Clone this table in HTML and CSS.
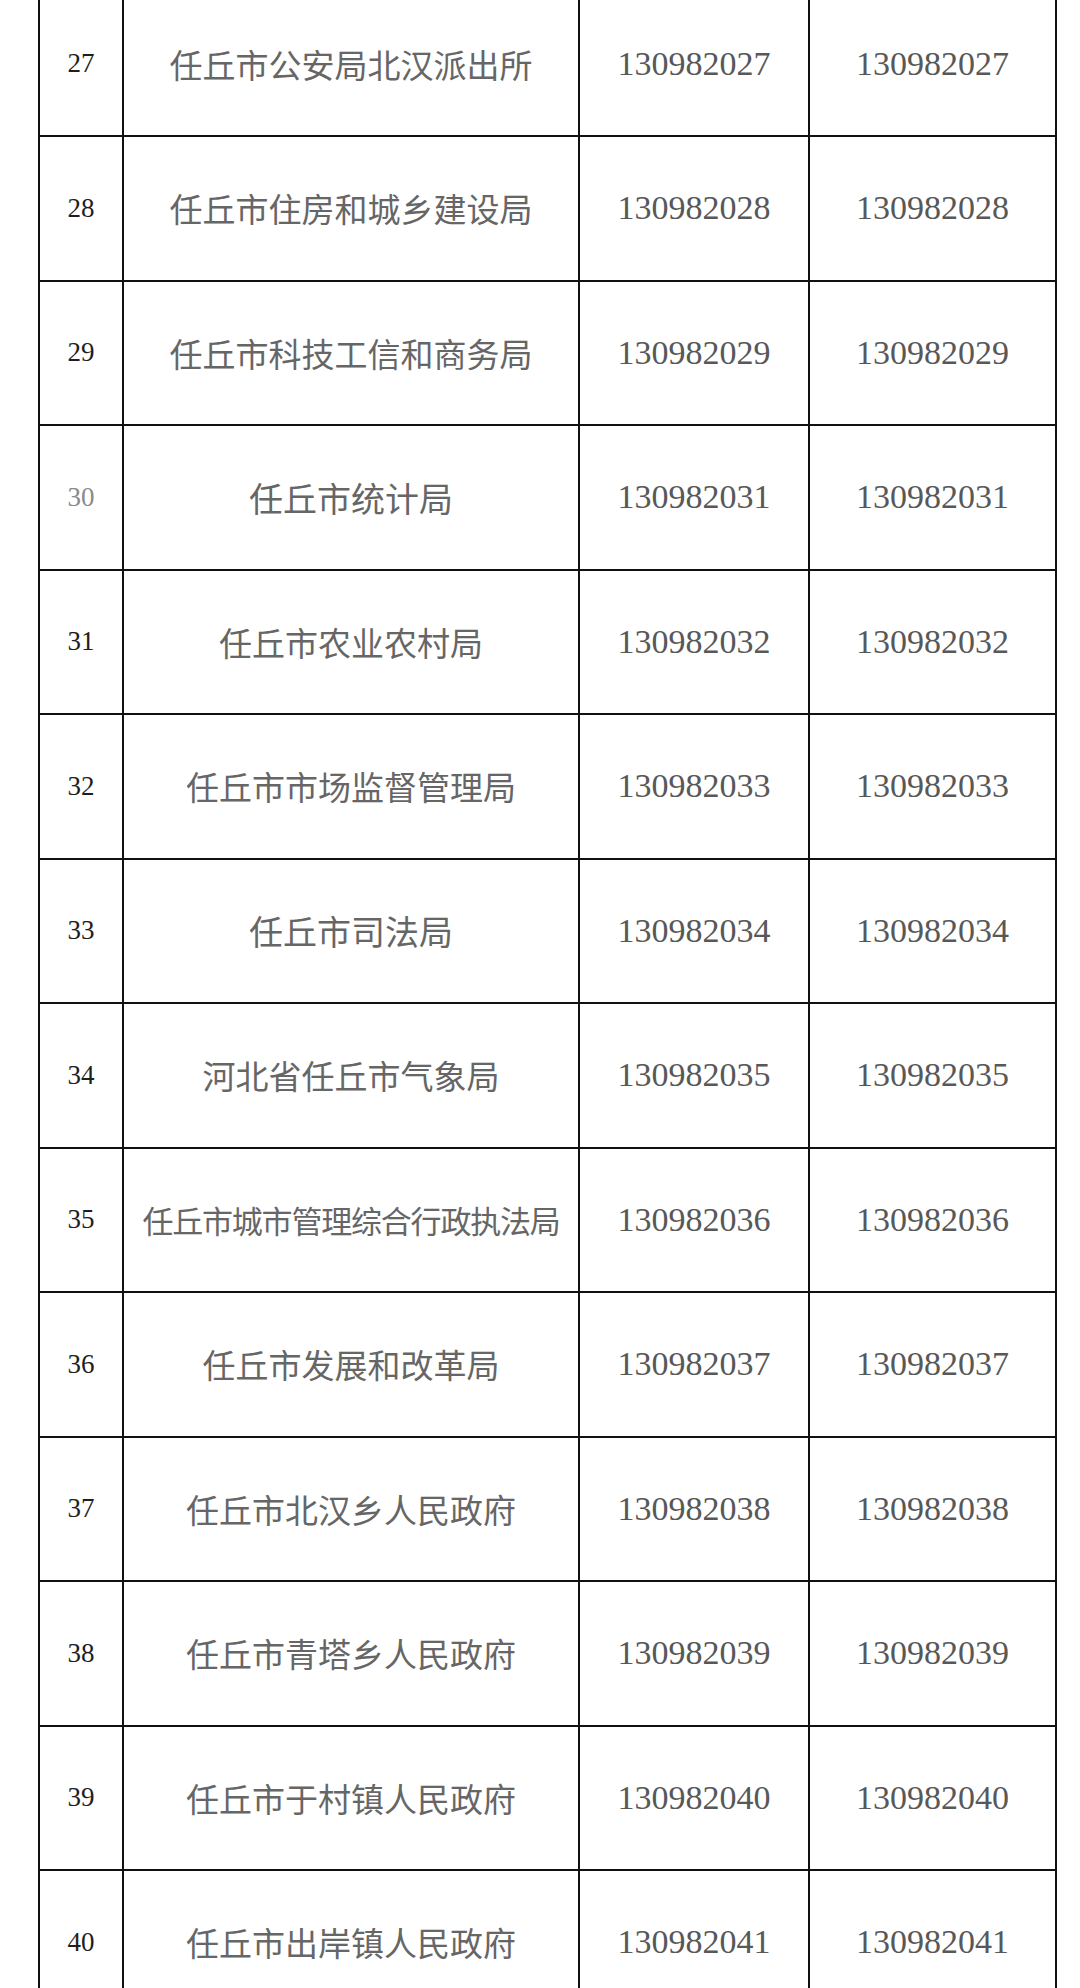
FILE: index.html
```html
<!DOCTYPE html>
<html lang="zh-CN">
<head>
<meta charset="utf-8">
<title>任丘市单位代码表</title>
<link rel="stylesheet" href="styles.css">
</head>
<body>
<div class="sheet">
  <div class="cell idx">27</div><div class="cell name">任丘市公安局北汉派出所</div><div class="cell code">130982027</div><div class="cell code">130982027</div>
  <div class="cell idx">28</div><div class="cell name">任丘市住房和城乡建设局</div><div class="cell code">130982028</div><div class="cell code">130982028</div>
  <div class="cell idx">29</div><div class="cell name">任丘市科技工信和商务局</div><div class="cell code">130982029</div><div class="cell code">130982029</div>
  <div class="cell idx idx-light">30</div><div class="cell name name-short">任丘市统计局</div><div class="cell code">130982031</div><div class="cell code">130982031</div>
  <div class="cell idx">31</div><div class="cell name">任丘市农业农村局</div><div class="cell code">130982032</div><div class="cell code">130982032</div>
  <div class="cell idx">32</div><div class="cell name">任丘市市场监督管理局</div><div class="cell code">130982033</div><div class="cell code">130982033</div>
  <div class="cell idx">33</div><div class="cell name name-short">任丘市司法局</div><div class="cell code">130982034</div><div class="cell code">130982034</div>
  <div class="cell idx">34</div><div class="cell name">河北省任丘市气象局</div><div class="cell code">130982035</div><div class="cell code">130982035</div>
  <div class="cell idx">35</div><div class="cell name name-long">任丘市城市管理综合行政执法局</div><div class="cell code">130982036</div><div class="cell code">130982036</div>
  <div class="cell idx">36</div><div class="cell name">任丘市发展和改革局</div><div class="cell code">130982037</div><div class="cell code">130982037</div>
  <div class="cell idx">37</div><div class="cell name">任丘市北汉乡人民政府</div><div class="cell code">130982038</div><div class="cell code">130982038</div>
  <div class="cell idx">38</div><div class="cell name">任丘市青塔乡人民政府</div><div class="cell code">130982039</div><div class="cell code">130982039</div>
  <div class="cell idx">39</div><div class="cell name">任丘市于村镇人民政府</div><div class="cell code">130982040</div><div class="cell code">130982040</div>
  <div class="cell idx">40</div><div class="cell name">任丘市出岸镇人民政府</div><div class="cell code">130982041</div><div class="cell code">130982041</div>
</div>
</body>
</html>
```
FILE: styles.css
```css
html, body {
  margin: 0;
  padding: 0;
  background: #ffffff;
}

body {
  overflow: hidden;
  height: 1988px;
}

.sheet {
  display: grid;
  grid-template-columns: 82px 454px 228px 245px;
  grid-auto-rows: 142.5px;
  gap: 2px;
  padding: 2px;
  background: #111111;
  width: max-content;
  margin-top: -9.5px;
  margin-left: 38px;
}

.cell {
  background: #ffffff;
  display: flex;
  align-items: center;
  justify-content: center;
  white-space: nowrap;
}

.idx {
  font-family: "Liberation Serif", "Times New Roman", serif;
  font-size: 27px;
  color: #1e1e1e;
}

.idx-light {
  color: #8a8a8a;
}

.name {
  font-family: "Noto Sans CJK SC", "Noto Sans", sans-serif;
  font-size: 33px;
  color: #666666;
}

.name-short {
  font-size: 34px;
}

.name-long {
  font-size: 31px;
  letter-spacing: -1.2px;
}

.code {
  font-family: "Liberation Serif", "Times New Roman", serif;
  font-size: 34px;
  color: #585858;
}
```
